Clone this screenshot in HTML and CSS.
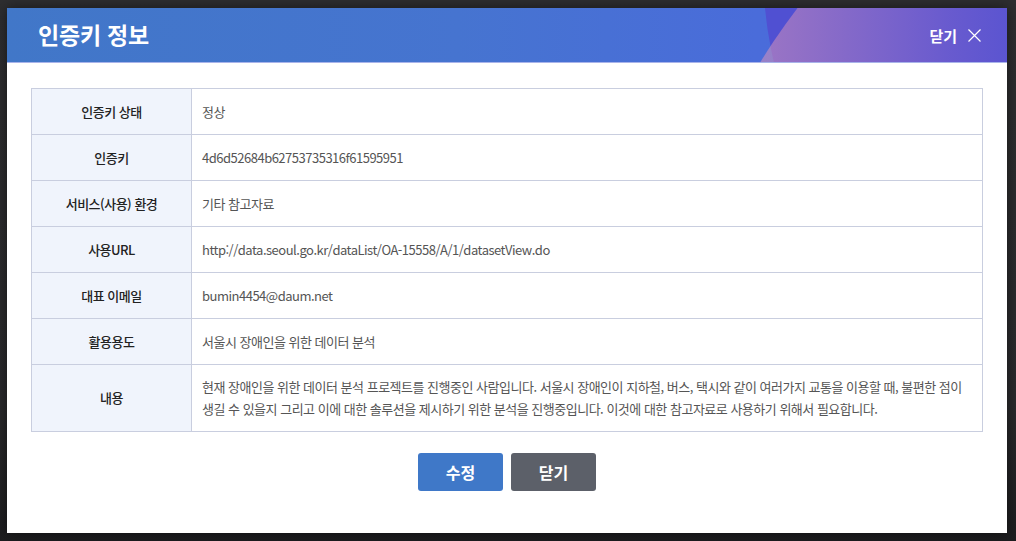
FILE: index.html
```html
<!DOCTYPE html>
<html lang="ko">
<head>
<meta charset="utf-8">
<title>인증키 정보</title>
<link rel="stylesheet" href="styles.css">
</head>
<body>
<div class="backdrop">
  <div class="modal">
    <div class="modal-header">
      <span class="deco deco-a"></span>
      <span class="deco deco-b"></span>
      <h1 class="modal-title">인증키 정보</h1>
      <button class="header-close" type="button">닫기
        <svg class="x-icon" width="13" height="13" viewBox="0 0 13 13"><path d="M0.5 0.5 L12.5 12.5 M12.5 0.5 L0.5 12.5" stroke="#fff" stroke-width="1.2" fill="none"/></svg>
      </button>
    </div>
    <div class="modal-body">
      <table class="info-table">
        <tr><th>인증키 상태</th><td>정상</td></tr>
        <tr><th>인증키</th><td>4d6d52684b62753735316f61595951</td></tr>
        <tr><th>서비스(사용) 환경</th><td>기타 참고자료</td></tr>
        <tr><th>사용URL</th><td>http://data.seoul.go.kr/dataList/OA-15558/A/1/datasetView.do</td></tr>
        <tr><th>대표 이메일</th><td>bumin4454@daum.net</td></tr>
        <tr><th>활용용도</th><td>서울시 장애인을 위한 데이터 분석</td></tr>
        <tr class="row-long"><th>내용</th><td>현재 장애인을 위한 데이터 분석 프로젝트를 진행중인 사람입니다. 서울시 장애인이 지하철, 버스, 택시와 같이 여러가지 교통을 이용할 때, 불편한 점이 생길 수 있을지 그리고 이에 대한 솔루션을 제시하기 위한 분석을 진행중입니다. 이것에 대한 참고자료로 사용하기 위해서 필요합니다.</td></tr>
      </table>
      <div class="actions">
        <button class="btn btn-primary" type="button">수정</button>
        <button class="btn btn-gray" type="button">닫기</button>
      </div>
    </div>
  </div>
</div>
</body>
</html>
```

FILE: styles.css
```css
* { box-sizing: border-box; }
html, body {
  margin: 0;
  padding: 0;
  height: 100%;
}
body {
  background: linear-gradient(180deg, #2e2e30 0%, #2a2a2c 75%, #1d1d1f 100%);
  font-family: "Noto Sans CJK KR", "Noto Sans", sans-serif;
  overflow: hidden;
}
.backdrop {
  padding: 8px 0 0 7px;
}
.modal {
  width: 1000px;
  height: 525px;
  background: #fff;
  box-shadow: 0 0 12px rgba(0,0,0,0.5);
  display: flex;
  flex-direction: column;
}
.modal-header {
  position: relative;
  overflow: hidden;
  height: 55px;
  flex: none;
  display: flex;
  align-items: center;
  justify-content: space-between;
  padding: 0 26px 0 31px;
  background: linear-gradient(90deg, #4177c8 0%, #4674d0 45%, #4a6cda 75%, #4d66dc 100%);
  border-bottom: 1px solid #a9b4ea;
}
.deco {
  position: absolute;
  border-radius: 50%;
  pointer-events: none;
}
.deco-a {
  left: 756px;
  top: -453px;
  width: 826px;
  height: 826px;
  background: #5050d2;
}
.deco-b {
  left: 658px;
  top: -254px;
  width: 1292px;
  height: 1292px;
  background: linear-gradient(90deg, rgba(214,146,186,0.55) 8%, rgba(150,110,200,0.35) 22%, rgba(92,76,200,0.05) 30%);
}
.modal-title {
  position: relative;
  margin: 0;
  color: #fff;
  font-size: 23px;
  font-weight: 700;
  letter-spacing: -0.2px;
  line-height: 1;
  padding-bottom: 1px;
}
.header-close {
  position: relative;
  border: 0;
  background: none;
  padding: 0;
  color: #fff;
  font-family: inherit;
  font-size: 15px;
  font-weight: 700;
  display: flex;
  align-items: center;
  gap: 11px;
  cursor: pointer;
}
.x-icon { display: block; }
.modal-body {
  padding: 25px 24px 0 24px;
  flex: 1;
}
.info-table {
  width: 952px;
  border-collapse: collapse;
  font-size: 13px;
  letter-spacing: -0.5px;
}
.info-table th,
.info-table td {
  border: 1px solid #c9cedf;
  height: 46px;
  padding: 0 10px;
}
.info-table th {
  width: 160px;
  background: #f0f4fc;
  color: #222;
  font-weight: 500;
  text-align: center;
}
.info-table td {
  color: #555;
  font-weight: 400;
  text-align: left;
  line-height: 22px;
}
.info-table .row-long th,
.info-table .row-long td {
  height: 67px;
  padding-top: 10px;
  padding-bottom: 11px;
}
.actions {
  display: flex;
  justify-content: center;
  gap: 8px;
  margin-top: 21px;
}
.btn {
  width: 85px;
  height: 38px;
  border: 0;
  border-radius: 3px;
  color: #fff;
  font-family: inherit;
  font-size: 16px;
  font-weight: 700;
  cursor: pointer;
}
.btn-primary { background: #3f78c8; }
.btn-gray { background: #5c6069; }
```
